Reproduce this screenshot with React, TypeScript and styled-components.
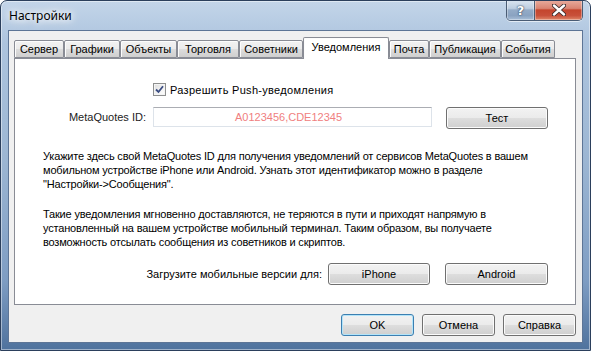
import React from "react";
import styled, { createGlobalStyle } from "styled-components";

const GlobalStyle = createGlobalStyle`
  html, body {
    margin: 0;
    padding: 0;
    background: #ffffff;
  }
  body {
    font-family: "Liberation Sans", Arial, sans-serif;
    font-size: 11px;
    color: #000000;
  }
`;

const tabs = [
  { label: "Сервер", width: 50 },
  { label: "Графики", width: 56 },
  { label: "Объекты", width: 57 },
  { label: "Торговля", width: 62 },
  { label: "Советники", width: 64 },
  { label: "Уведомления", width: 86, active: true },
  { label: "Почта", width: 40 },
  { label: "Публикация", width: 72 },
  { label: "События", width: 54 },
];

const Window = styled.div`
  width: 591px;
  height: 351px;
  box-sizing: border-box;
  display: flex;
  flex-direction: column;
  border: 1px solid #2b3f5c;
  border-radius: 7px 7px 0 0;
  background: linear-gradient(
    180deg,
    #c3d5e9 0%,
    #adc4de 12%,
    #9cb6d3 45%,
    #7e9dc3 80%,
    #4f729d 100%
  );
  box-shadow: inset 0 0 0 1px rgba(255, 255, 255, 0.45);
  overflow: hidden;
`;

const TitleBar = styled.div`
  height: 29px;
  display: flex;
  align-items: flex-start;
  padding-left: 8px;
  padding-right: 7px;
  flex-shrink: 0;
`;

const Title = styled.div`
  font-family: "Noto Sans", "Open Sans", sans-serif;
  font-size: 12px;
  line-height: 14px;
  margin-top: 8px;
  color: #000000;
  text-shadow: 0 0 6px #ffffff, 0 0 10px #ffffff, 0 0 14px #ffffff;
`;

const Controls = styled.div`
  margin-left: auto;
  margin-top: -1px;
  display: flex;
  border: 1px solid #4a5c74;
  border-top: none;
  border-radius: 0 0 5px 5px;
  overflow: hidden;
  box-shadow: 0 1px 0 rgba(255, 255, 255, 0.6);
`;

const CtrlButton = styled.div<{ $close?: boolean }>`
  width: ${(p) => (p.$close ? 47 : 27)}px;
  height: 20px;
  display: flex;
  align-items: center;
  justify-content: center;
  box-shadow: inset 0 0 0 1px rgba(255, 255, 255, 0.35);
  background: ${(p) =>
    p.$close
      ? "linear-gradient(180deg, #e8ad9f 0%, #d98472 42%, #c4452d 50%, #c8503a 78%, #e0876a 100%)"
      : "linear-gradient(180deg, #dce6f1 0%, #bccde0 42%, #94abc7 50%, #8aa3c1 78%, #a9bfd8 100%)"};
  border-left: ${(p) => (p.$close ? "1px solid #4a5c74" : "none")};
`;

const HelpMark = styled.span`
  font-family: "DejaVu Sans", sans-serif;
  font-weight: bold;
  font-size: 13px;
  color: #ffffff;
  text-shadow: 0 0 2px #2c3e57, 0 0 1px #2c3e57;
`;

const Client = styled.div`
  flex: 1;
  margin: 0 7px 7px 7px;
  border: 1px solid #5d7596;
  background: #f0f0f0;
  display: flex;
  flex-direction: column;
  padding: 6px 5px 0 5px;
`;

const TabStrip = styled.div`
  display: flex;
  align-items: flex-end;
  height: 21px;
  position: relative;
  z-index: 1;
`;

const Tab = styled.div<{ $active?: boolean }>`
  box-sizing: border-box;
  height: ${(p) => (p.$active ? 22 : 18)}px;
  margin-bottom: ${(p) => (p.$active ? -1 : 0)}px;
  border: 1px solid #898c95;
  border-bottom: ${(p) => (p.$active ? "none" : "1px solid #898c95")};
  border-radius: 2px 2px 0 0;
  background: ${(p) =>
    p.$active
      ? "#ffffff"
      : "linear-gradient(180deg, #f2f2f2 0%, #ebebeb 50%, #dddddd 51%, #cfcfcf 100%)"};
  box-shadow: inset 1px 1px 0 #fcfcfc;
  display: flex;
  align-items: center;
  justify-content: center;
  padding-bottom: ${(p) => (p.$active ? 3 : 0)}px;
  font-size: 11px;
  white-space: nowrap;
`;

const Panel = styled.div`
  width: 562px;
  height: 247px;
  box-sizing: border-box;
  border: 1px solid #898c95;
  background: #ffffff;
  display: flex;
  flex-direction: column;
`;

const CheckRow = styled.label`
  display: flex;
  align-items: center;
  margin-top: 24px;
  padding-left: 138px;
  height: 13px;
  letter-spacing: 0.3px;
`;

const CheckBox = styled.span`
  width: 13px;
  height: 13px;
  box-sizing: border-box;
  border: 1px solid #8e8f8f;
  background: linear-gradient(135deg, #dcdcdc 0%, #f4f4f4 60%, #ffffff 100%);
  box-shadow: inset 0 0 0 1px #f4f4f4;
  display: flex;
  align-items: center;
  justify-content: center;
  margin-right: 4px;
`;

const FieldRow = styled.div`
  display: flex;
  align-items: flex-start;
  margin-top: 11px;
`;

const FieldLabel = styled.div`
  width: 131px;
  margin-right: 7px;
  text-align: right;
  line-height: 20px;
  color: #222222;
`;

const TextInput = styled.div`
  width: 279px;
  height: 20px;
  box-sizing: border-box;
  border: 1px solid #dde3ea;
  border-top-color: #abadb3;
  background: #ffffff;
  color: #f08080;
  text-align: center;
  line-height: 18px;
  padding-right: 8px;
`;

const Button = styled.div<{ $w: number; $default?: boolean }>`
  width: ${(p) => p.$w}px;
  height: 22px;
  box-sizing: border-box;
  border: 1px solid ${(p) => (p.$default ? "#3c7fb1" : "#707070")};
  border-radius: 3px;
  background: linear-gradient(180deg, #f2f2f2 0%, #ebebeb 48%, #dddddd 52%, #cfcfcf 100%);
  box-shadow: inset 0 0 0 1px ${(p) => (p.$default ? "#b3e4f9" : "#fbfbfb")};
  display: flex;
  align-items: center;
  justify-content: center;
  font-size: 11px;
  flex-shrink: 0;
`;

const Para = styled.div<{ $top: number }>`
  margin-top: ${(p) => p.$top}px;
  padding-left: 28px;
  line-height: 14px;
  white-space: nowrap;
  letter-spacing: -0.18px;
`;

const Line = styled.div``;

const DownloadRow = styled.div`
  display: flex;
  align-items: center;
  margin-top: 14px;
`;

const DownloadLabel = styled.div`
  width: 307px;
  margin-right: 6px;
  text-align: right;
`;

const DialogButtons = styled.div`
  display: flex;
  justify-content: flex-end;
  gap: 8px;
  margin-top: 9px;
  padding-right: 1px;
`;

export default function App() {
  return (
    <>
      <GlobalStyle />
      <Window>
        <TitleBar>
          <Title>Настройки</Title>
          <Controls>
            <CtrlButton>
              <HelpMark>?</HelpMark>
            </CtrlButton>
            <CtrlButton $close>
              <svg width="14" height="12" viewBox="0 0 14 12">
                <path
                  d="M2 1.5 L12 10.5 M12 1.5 L2 10.5"
                  stroke="#3a2a2a"
                  strokeWidth="4.2"
                  strokeLinecap="round"
                />
                <path
                  d="M2 1.5 L12 10.5 M12 1.5 L2 10.5"
                  stroke="#ffffff"
                  strokeWidth="2.4"
                  strokeLinecap="round"
                />
              </svg>
            </CtrlButton>
          </Controls>
        </TitleBar>
        <Client>
          <TabStrip>
            {tabs.map((t) => (
              <Tab key={t.label} $active={t.active} style={{ width: t.width }}>
                {t.label}
              </Tab>
            ))}
          </TabStrip>
          <Panel>
            <CheckRow>
              <CheckBox>
                <svg width="9" height="9" viewBox="0 0 9 9">
                  <path
                    d="M1 4.5 L3.5 7 L8 1.2"
                    fill="none"
                    stroke="#3b4d82"
                    strokeWidth="1.8"
                  />
                </svg>
              </CheckBox>
              Разрешить Push-уведомления
            </CheckRow>
            <FieldRow>
              <FieldLabel>MetaQuotes ID:</FieldLabel>
              <TextInput>A0123456,CDE12345</TextInput>
              <Button $w={102} style={{ marginLeft: 14 }}>
                Тест
              </Button>
            </FieldRow>
            <Para $top={20}>
              <Line>
                Укажите здесь свой MetaQuotes ID для получения уведомлений от сервисов MetaQuotes в вашем
              </Line>
              <Line>
                мобильном устройстве iPhone или Android. Узнать этот идентификатор можно в разделе
              </Line>
              <Line>"Настройки-&gt;Сообщения".</Line>
            </Para>
            <Para $top={16}>
              <Line>
                Такие уведомления мгновенно доставляются, не теряются в пути и приходят напрямую в
              </Line>
              <Line>
                установленный на вашем устройстве мобильный терминал. Таким образом, вы получаете
              </Line>
              <Line>возможность отсылать сообщения из советников и скриптов.</Line>
            </Para>
            <DownloadRow>
              <DownloadLabel>Загрузите мобильные версии для:</DownloadLabel>
              <Button $w={102}>iPhone</Button>
              <Button $w={103} style={{ marginLeft: 15 }}>
                Android
              </Button>
            </DownloadRow>
          </Panel>
          <DialogButtons>
            <Button $w={73} $default>
              OK
            </Button>
            <Button $w={73}>Отмена</Button>
            <Button $w={73}>Справка</Button>
          </DialogButtons>
        </Client>
      </Window>
    </>
  );
}
